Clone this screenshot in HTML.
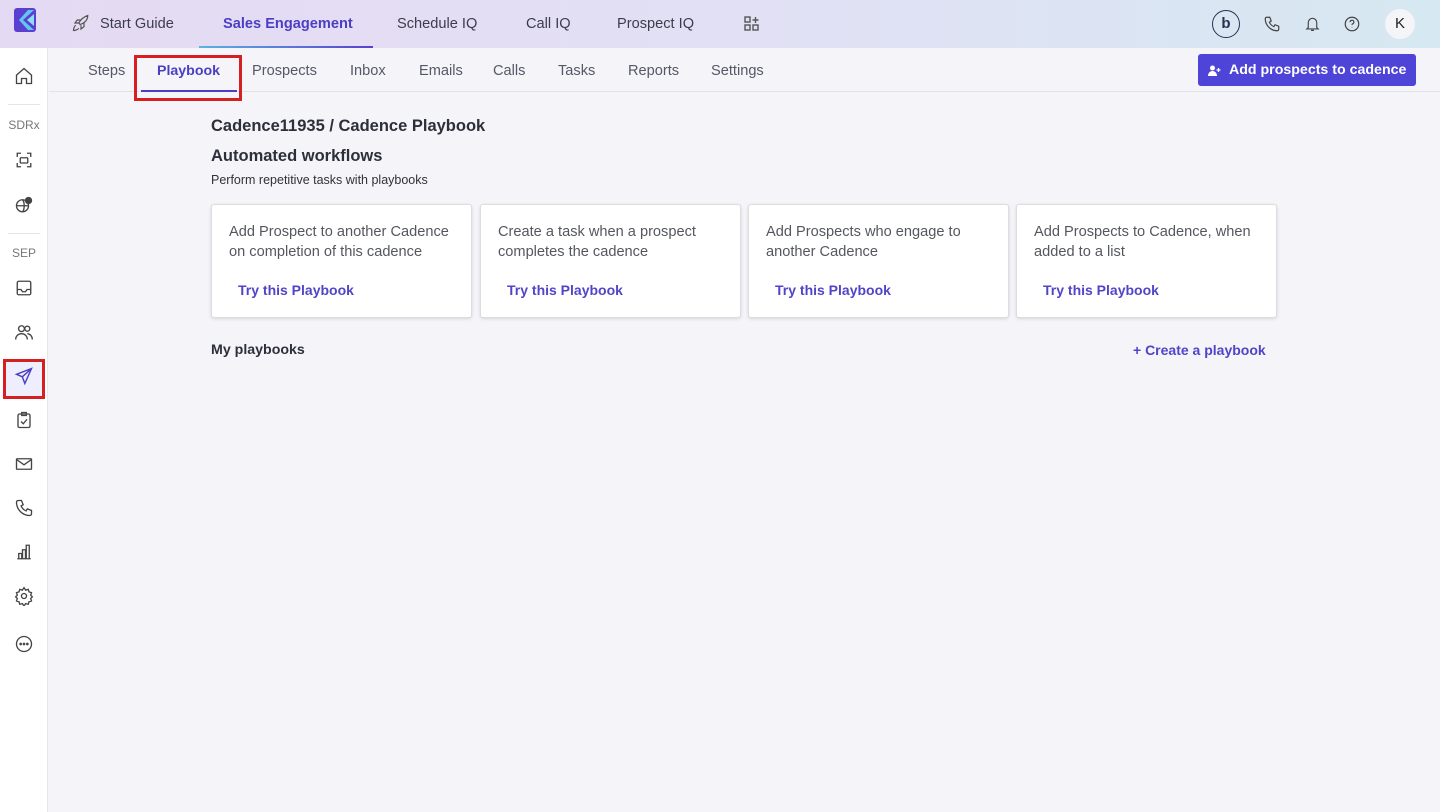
<!DOCTYPE html>
<html><head><meta charset="utf-8"><style>
*{box-sizing:border-box;margin:0;padding:0}
body{width:1440px;height:812px;overflow:hidden;font-family:"Liberation Sans",sans-serif;background:#f4f4f9;color:#2d2f3a;position:relative}
.top{position:absolute;left:0;top:0;width:1440px;height:48px;background:linear-gradient(90deg,#e5daf3 0%,#e2e0f4 50%,#d6e8f2 100%)}
.top .t{position:absolute;top:16px;font-size:14.6px;color:#3b3d4a;white-space:nowrap}
.side{position:absolute;left:0;top:48px;width:48px;height:764px;background:#fff;border-right:1px solid #e6e6ee}
.sub{position:absolute;left:49px;top:48px;width:1391px;height:44px;border-bottom:1px solid #e2e2ea}
.sub span{position:absolute;top:15px;font-size:14.6px;color:#555866;white-space:nowrap}
.ic{position:absolute;left:14px;width:20px;height:20px}
.card{position:absolute;top:204px;width:261px;height:114px;background:#fff;border:1px solid #ddd;border-radius:3px;box-shadow:0 1px 3px rgba(0,0,0,.12)}
.card p{position:absolute;left:17px;top:17px;font-size:14.6px;line-height:20px;color:#55575f;white-space:nowrap}
.card a{position:absolute;left:26px;top:77px;font-size:14px;font-weight:bold;color:#5045c8}
</style></head><body>
<div class="top">
<svg style="position:absolute;left:14px;top:8px" width="22" height="24" viewBox="0 0 22 24"><rect width="22" height="24" rx="3" fill="#5a3fd0"/><path d="M20 2 L9 12 L20 22 L14 22 L5 12 L14 2Z" fill="#5ec8ef"/><path d="M20 6 L13 12 L20 18Z" fill="#8fdcf4"/></svg>
<svg style="position:absolute;left:72px;top:14px" width="18" height="18" viewBox="0 0 24 24" fill="none" stroke="#555" stroke-width="1.6"><path d="M5 15c-2 1-3 5-3 7 2 0 6-1 7-3M9 12a22 22 0 0 1 12-10c0 4-2 9-10 12zM9 12H4l3-4h5M12 15v5l4-3v-5"/></svg>
<span class="t" style="left:100px">Start Guide</span>
<span class="t" style="left:223px;color:#4a3fc4;font-weight:bold">Sales Engagement</span>
<div style="position:absolute;left:199px;top:46px;width:174px;height:2px;background:linear-gradient(90deg,#5ab4e0,#5a3fd0)"></div>
<span class="t" style="left:397px">Schedule IQ</span>
<span class="t" style="left:526px">Call IQ</span>
<span class="t" style="left:617px">Prospect IQ</span>
<svg style="position:absolute;left:744px;top:16px" width="16" height="16" viewBox="0 0 16 16" fill="none" stroke="#555" stroke-width="1.4"><rect x="1" y="1" width="5" height="5"/><rect x="1" y="9" width="5" height="5"/><rect x="9" y="9" width="5" height="5"/><path d="M11.5 1v6M8.5 4h6"/></svg>
<div style="position:absolute;left:1212px;top:10px;width:28px;height:28px;border:1.5px solid #2d2f52;border-radius:50%;text-align:center;line-height:25px;font-weight:bold;color:#2d2f52;font-size:15px">b</div>
<svg style="position:absolute;left:1263px;top:15px" width="18" height="18" viewBox="0 0 24 24" fill="none" stroke="#444" stroke-width="1.6"><path d="M5 3h4l2 5-2.5 1.5a11 11 0 0 0 6 6L16 13l5 2v4a2 2 0 0 1-2 2A16 16 0 0 1 3 5a2 2 0 0 1 2-2"/></svg>
<svg style="position:absolute;left:1304px;top:15px" width="17" height="18" viewBox="0 0 24 24" fill="none" stroke="#444" stroke-width="1.6"><path d="M6 17V10a6 6 0 0 1 12 0v7l2 2H4zM10 21h4"/></svg>
<svg style="position:absolute;left:1343px;top:15px" width="18" height="18" viewBox="0 0 24 24" fill="none" stroke="#444" stroke-width="1.6"><circle cx="12" cy="12" r="9"/><path d="M9.5 9.5a2.5 2.5 0 1 1 3 2.4c-.5.2-.5.6-.5 1.6M12 16.5v.5"/></svg>
<div style="position:absolute;left:1385px;top:9px;width:30px;height:30px;border-radius:50%;background:#f5f5f7;text-align:center;line-height:30px;font-size:15px;color:#222">K</div>
</div>
<div class="side">
<svg class="ic" style="top:18px" viewBox="0 0 24 24" fill="none" stroke="#444" stroke-width="1.6"><path d="M3 11l9-8 9 8v10h-6v-6h-6v6H3z"/></svg>
<div style="position:absolute;left:8px;top:56px;width:32px;border-top:1px solid #e4e4ea"></div>
<div style="position:absolute;top:70px;width:48px;text-align:center;font-size:12px;color:#777">SDRx</div>
<svg class="ic" style="top:102px;width:18px;left:15px" viewBox="0 0 24 24" fill="none" stroke="#444" stroke-width="1.8"><path d="M3 8V3h5M16 3h5v5M21 16v5h-5M8 21H3v-5"/><rect x="7" y="9" width="10" height="7" rx="1"/></svg>
<svg class="ic" style="top:147px;width:18px;left:15px" viewBox="0 0 24 24" fill="none" stroke="#444" stroke-width="1.8"><circle cx="10" cy="13" r="8"/><path d="M2 13h16M10 5c3 3 3 13 0 16"/><circle cx="18" cy="6" r="4" fill="#444"/></svg>
<div style="position:absolute;left:8px;top:185px;width:32px;border-top:1px solid #e4e4ea"></div>
<div style="position:absolute;top:198px;width:48px;text-align:center;font-size:12px;color:#777">SEP</div>
<svg class="ic" style="top:230px;width:18px;left:15px" viewBox="0 0 24 24" fill="none" stroke="#444" stroke-width="1.8"><rect x="3" y="3" width="18" height="18" rx="2"/><path d="M3 14h5l2 3h4l2-3h5"/></svg>
<svg class="ic" style="top:274px" viewBox="0 0 24 24" fill="none" stroke="#444" stroke-width="1.6"><circle cx="9" cy="8" r="3.5"/><circle cx="16" cy="8" r="3"/><path d="M2 21c0-4 3-7 7-7s7 3 7 7M16 14c3 0 6 3 6 7"/></svg>
<div style="position:absolute;left:3px;top:311px;width:42px;height:40px;border:3px solid #d42020;background:#eeeefc"></div>
<svg class="ic" style="top:318px;left:14px" viewBox="0 0 24 24" fill="none" stroke="#4a3fc4" stroke-width="1.7"><path d="M21 3L3 10l7 3 3 8zM10 13l11-10"/></svg>
<svg class="ic" style="top:362px;width:18px;left:15px" viewBox="0 0 24 24" fill="none" stroke="#444" stroke-width="1.8"><rect x="4" y="4" width="16" height="18" rx="2"/><path d="M9 2h6v4H9zM8 14l3 3 5-6"/></svg>
<svg class="ic" style="top:406px;width:18px;left:15px" viewBox="0 0 24 24" fill="none" stroke="#444" stroke-width="1.8"><rect x="2" y="5" width="20" height="14" rx="1"/><path d="M2 6l10 7 10-7"/></svg>
<svg class="ic" style="top:450px" viewBox="0 0 24 24" fill="none" stroke="#444" stroke-width="1.6"><path d="M5 3h4l2 5-2.5 1.5a11 11 0 0 0 6 6L16 13l5 2v4a2 2 0 0 1-2 2A16 16 0 0 1 3 5a2 2 0 0 1 2-2"/></svg>
<svg class="ic" style="top:494px;width:18px;left:15px" viewBox="0 0 24 24" fill="none" stroke="#444" stroke-width="1.8"><path d="M3 21h18M5 21v-7h4v7M10 21V9h4v12M15 21V3h4v18"/></svg>
<svg class="ic" style="top:538px" viewBox="0 0 24 24" fill="none" stroke="#444" stroke-width="1.6"><circle cx="12" cy="12" r="3"/><path d="M12 2l2 3 3-1 1 3 3 1-1 3 2 2-2 2 1 3-3 1-1 3-3-1-2 3-2-3-3 1-1-3-3-1 1-3-2-2 2-2-1-3 3-1 1-3 3 1z"/></svg>
<svg class="ic" style="top:586px" viewBox="0 0 24 24" fill="none" stroke="#444" stroke-width="1.6"><circle cx="12" cy="12" r="9"/><circle cx="8" cy="12" r=".8" fill="#444"/><circle cx="12" cy="12" r=".8" fill="#444"/><circle cx="16" cy="12" r=".8" fill="#444"/></svg>
</div>
<div class="sub">
<span style="left:39px">Steps</span>
<span style="left:108px;color:#4a3fc4;font-weight:bold;font-size:14.2px">Playbook</span>
<span style="left:203px">Prospects</span>
<span style="left:301px">Inbox</span>
<span style="left:370px">Emails</span>
<span style="left:444px">Calls</span>
<span style="left:509px">Tasks</span>
<span style="left:579px">Reports</span>
<span style="left:662px">Settings</span>
<div style="position:absolute;left:92px;top:42px;width:96px;height:2px;background:#4a3fc4"></div>
<div style="position:absolute;left:85px;top:7px;width:108px;height:46px;border:3px solid #d42020"></div>
<div style="position:absolute;left:1149px;top:6px;width:218px;height:32px;background:#4e44d8;border-radius:3px;color:#fff;font-size:14.2px;font-weight:bold;line-height:32px;padding-left:31px;white-space:nowrap">Add prospects to cadence</div>
<svg style="position:absolute;left:1159px;top:17px" width="13" height="11" viewBox="0 0 13 11" fill="#fff"><circle cx="4.5" cy="3" r="2.5"/><path d="M0 11c0-3 2-5 4.5-5S9 8 9 11z"/><path d="M10.5 3v4M8.5 5h4" stroke="#fff" stroke-width="1.3"/></svg>
</div>
<div style="position:absolute;left:211px;top:117px;font-size:16.5px;font-weight:bold;color:#2d2f3a">Cadence11935 / Cadence Playbook</div>
<div style="position:absolute;left:211px;top:147px;font-size:16.5px;font-weight:bold;color:#2d2f3a">Automated workflows</div>
<div style="position:absolute;left:211px;top:173px;font-size:12.5px;color:#333">Perform repetitive tasks with playbooks</div>
<div class="card" style="left:211px"><p>Add Prospect to another Cadence<br>on completion of this cadence</p><a>Try this Playbook</a></div>
<div class="card" style="left:480px"><p>Create a task when a prospect<br>completes the cadence</p><a>Try this Playbook</a></div>
<div class="card" style="left:748px"><p>Add Prospects who engage to<br>another Cadence</p><a>Try this Playbook</a></div>
<div class="card" style="left:1016px"><p>Add Prospects to Cadence, when<br>added to a list</p><a>Try this Playbook</a></div>
<div style="position:absolute;left:211px;top:342px;font-size:14.2px;font-weight:bold;color:#2d2f3a">My playbooks</div>
<div style="position:absolute;left:1133px;top:342px;font-size:14px;font-weight:bold;color:#5045c8">+ Create a playbook</div>
</body></html>
